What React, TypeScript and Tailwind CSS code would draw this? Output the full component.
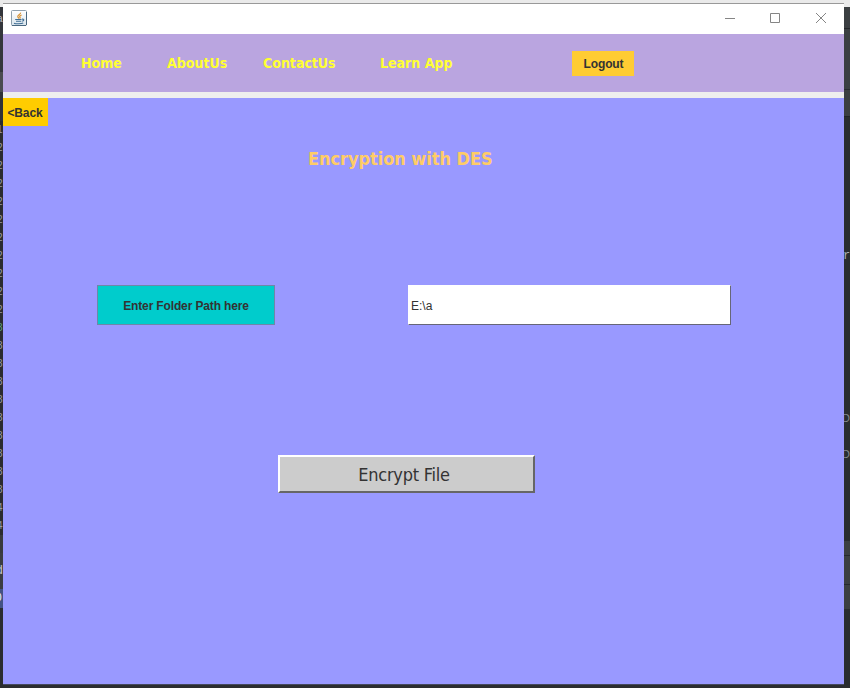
const tahoma = "font-['DejaVu_Sans_Condensed','DejaVu_Sans',sans-serif] [font-stretch:condensed]";
const arial = "font-['Liberation_Sans',Arial,sans-serif]";

const lineMarks = ["1", "2", "2", "2", "2", "2", "2", "2", "2", "2", "2", "3", "3", "3", "3", "3", "3", "3", "3", "3", "3", "4", "4"];

function JavaIcon() {
  return (
    <svg width="16" height="16" viewBox="0 0 16 16" fill="none">
      <defs>
        <linearGradient id="tile" x1="0" y1="0" x2="0" y2="1">
          <stop offset="0" stopColor="#fff" />
          <stop offset="1" stopColor="#d9e5ed" />
        </linearGradient>
      </defs>
      <rect x=".5" y=".5" width="15" height="15" rx="1" fill="url(#tile)" stroke="#8fa0ad" />
      <path d="M1 15.5h14M15.5 2v13" stroke="#48677f" />
      <path d="M9.6 2.6c.2 1.8-3.6 2.6-2.8 4.2.3.7 1 1 1.1 1.8M10.6 5c-2.3.8-2.2 1.6-1.5 2.4.2.3 0 .7-.4 1" stroke="#d9902f" strokeWidth="1.2" />
      <path d="M4.2 9.5h6.3M5 11.3h5.3M3 13.2c2 .8 7.4.7 9.2-.2M11 9.3c2.3-.7 2.5 1.3.2 2" stroke="#3f6d94" strokeWidth="1.1" />
    </svg>
  );
}

function LeftEdge() {
  return (
    <div className={`h-[681px] w-[3px] shrink-0 overflow-hidden bg-[#2b2c30] text-[10px] ${arial}`}>
      <div className="h-[7px] bg-[#eaeaea]" />
      <div className="h-[65px] bg-[#34363b] pt-[6px] text-[#b8bcc4]"><span className="-ml-[3px] block leading-[12px]">a</span></div>
      <div className="h-[20px] bg-[#4a4b50]" />
      <div className="h-[29px] bg-[#303238]" />
      <div className="h-[414px] overflow-hidden">
        {lineMarks.map((mark, i) => (
          <span key={i} className={`-ml-[3px] block h-[18px] leading-[18px] ${i === 11 ? "text-[#5da37b]" : "text-[#9a9ca0]"}`}>{mark}</span>
        ))}
      </div>
      <div className="h-[18px] bg-[#383a3e]" />
      <div className="h-[36px] bg-[#3b3d41] pt-[9px] text-[12px] leading-[16px] text-[#c6c8cc]"><span className="-ml-[4px] block">d</span></div>
      <div className="h-[19px] bg-[#435284] leading-[18px] text-white"><span className="-ml-[4px] block">0</span></div>
    </div>
  );
}

function RightEdge() {
  return (
    <div className="h-[685px] w-[6px] shrink-0 overflow-hidden bg-[#292d30] font-['Liberation_Mono',monospace] text-[12px] leading-[14px] text-[#abb0b5]">
      <div className="h-[7px] bg-[#eaeaea]" />
      <div className="h-[22px] border-b border-[#24272a] bg-[#3b3f42]" />
      <div className="h-[61px] border-b border-[#292c2f] bg-[#3b3f42]" />
      <div className="h-[26px] bg-[#3b3f42]" />
      <div className="h-[133px] border-t border-[#202427]" />
      <div className="h-[162px]"><span className="-ml-px block">r</span></div>
      <div className={`h-[36px] text-[11px] text-[#85898d] ${arial}`}><span className="-ml-[2px] block">D</span></div>
      <div className={`h-[94px] text-[11px] text-[#85898d] ${arial}`}><span className="-ml-[2px] block">D</span></div>
      <div className="h-[14px] bg-[#3b3f42]" />
      <div className="h-[30px] border-y border-[#25292c] bg-[#3b3f42]" />
      <div className="h-[24px] bg-[#3b3f42]" />
    </div>
  );
}

function TitleBar() {
  return (
    <header className="flex h-[30px] justify-between bg-white pr-[17px] pl-[8px]">
      <span className="mt-[6px]"><JavaIcon /></span>
      <svg className="mt-[8px]" width="102" height="13" viewBox="0 0 102 13" fill="none" stroke="#858585">
        <path d="M0 6.5h10" />
        <path d="M45.5 1.5h9v9h-9z" />
        <path d="m91 1 10 10m0-10L91 11" />
      </svg>
    </header>
  );
}

function NavBar() {
  const link = `${tahoma} block whitespace-nowrap text-left text-[14px] font-bold leading-[20px] text-[#ffff33]`;
  return (
    <nav className="flex h-[58px] items-start bg-[#baa5e0] pt-[17px] pl-[78px]">
      <button className={`${link} mt-[2px] w-[86px]`}>Home</button>
      <button className={`${link} mt-[2px] w-[96px]`}>AboutUs</button>
      <button className={`${link} mt-[2px] w-[117px]`}>ContactUs</button>
      <button className={`${link} mt-[2px] w-[192px]`}>Learn App</button>
      <button className={`${arial} h-[25px] w-[62px] bg-[#ffcc33] pl-px text-[12px] font-bold tracking-[-0.14px] text-[#333333]`}>Logout</button>
    </nav>
  );
}

export default function App() {
  return (
    <div className="h-[688px] w-[850px] overflow-hidden bg-[#2b2d30]">
      <div className="flex h-[685px]">
        <LeftEdge />
        <div className="w-[841px] shrink-0">
          <div className="h-[4px] border-b border-[#999999] bg-[#eaeaea]" />
          <TitleBar />
          <NavBar />
          <div className="h-[6px] bg-[#eeeeee]" />
          <main className="flex h-[586px] flex-col items-start bg-[#9999ff]">
            <button className={`${arial} h-[28px] w-[45px] bg-[#ffcc00] pt-[2px] pr-px text-[12px] font-bold tracking-[-0.1px] text-[#333333]`}>&lt;Back</button>
            <h1 className={`${tahoma} mt-[21px] ml-[305px] h-[24px] whitespace-nowrap text-[18px] font-bold leading-[24px] tracking-[-0.05px] text-[#ffcc66]`}>Encryption with DES</h1>
            <div className="mt-[114px] ml-[94px] flex">
              <button className={`${arial} h-[40px] w-[178px] border border-[#6d87a8] bg-[#00cccc] pt-[2px] text-[12px] font-bold tracking-[-0.14px] text-[#333333]`}>Enter Folder Path here</button>
              <input className={`${arial} ml-[133px] h-[40px] w-[323px] border-t border-r border-b border-l border-t-white border-r-[#666677] border-b-[#666677] border-l-white bg-white pt-px pl-[2px] text-[12px] text-[#333333] outline-none`} defaultValue="E:\a" />
            </div>
            <button className={`${tahoma} mt-[130px] ml-[275px] h-[38px] w-[257px] border-2 border-t-white border-r-[#666666] border-b-[#666666] border-l-white bg-[#cccccc] pr-[5px] text-[18px] tracking-[-0.25px] text-[#333333]`}>Encrypt File</button>
          </main>
          <div className="h-px bg-[#44485f]" />
        </div>
        <RightEdge />
      </div>
    </div>
  );
}
